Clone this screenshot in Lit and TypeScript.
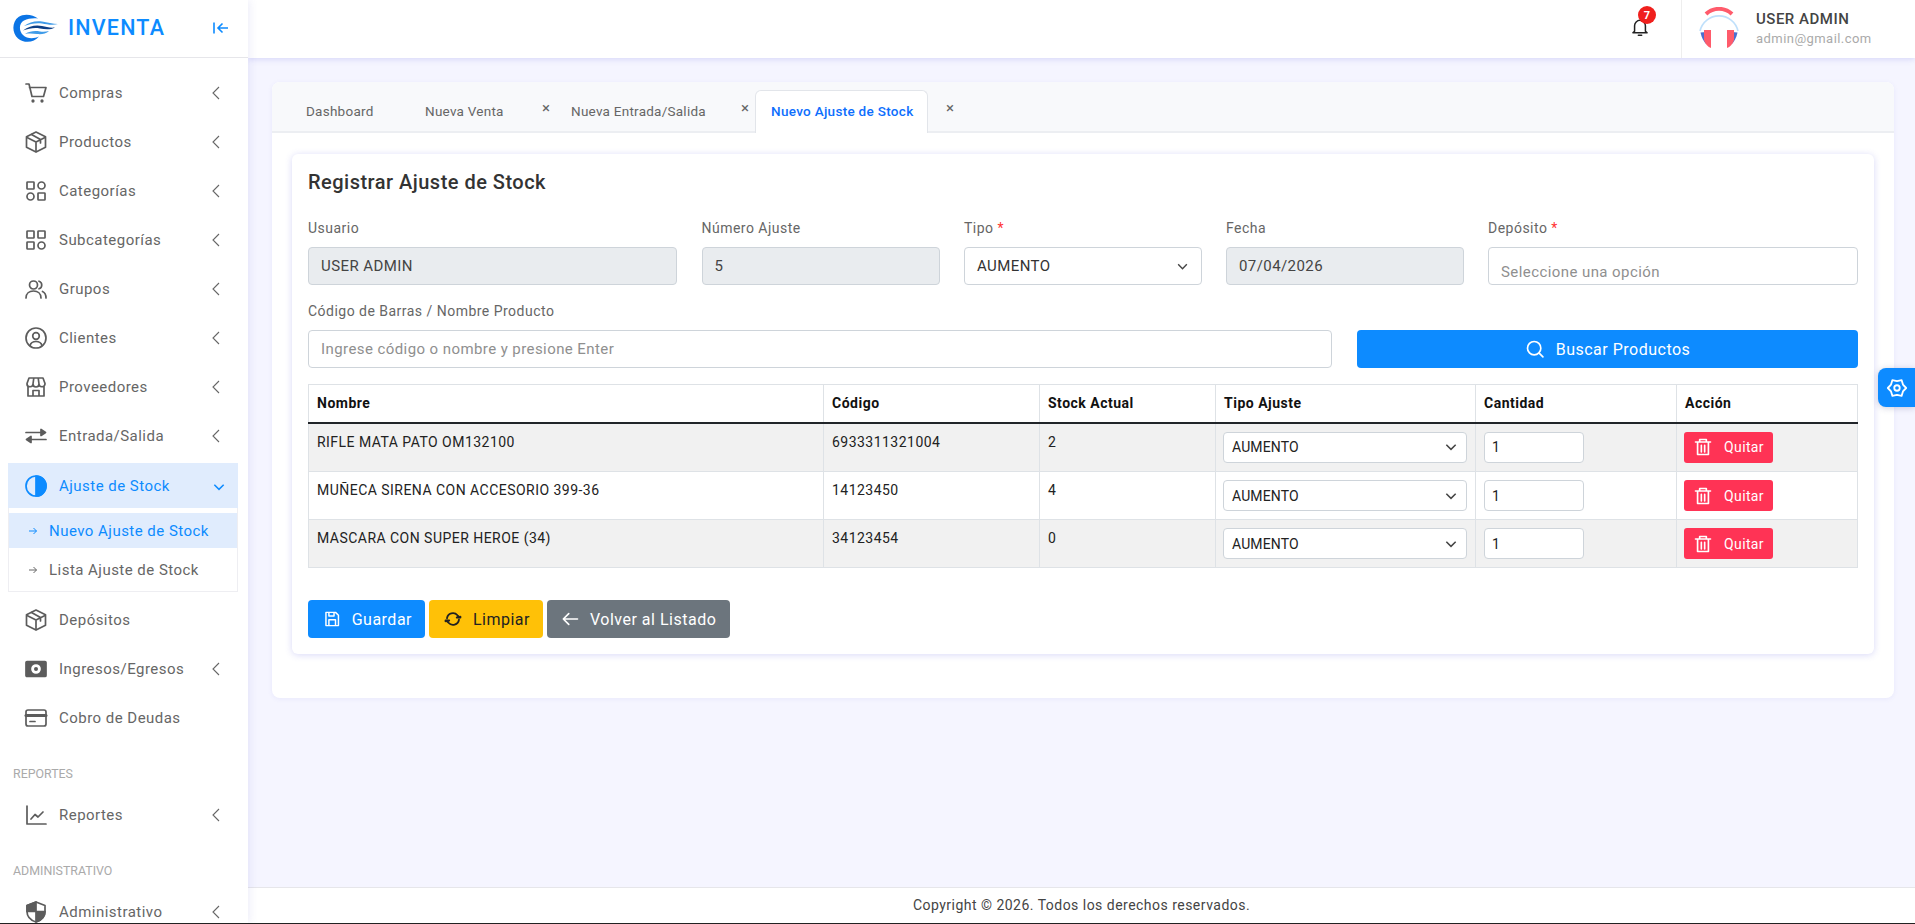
import { LitElement, html, css, svg } from 'lit';
import { customElement } from 'lit/decorators.js';

const line = (body: unknown, size = 24, sw = 1.7) => html`<svg width=${size} height=${size} viewBox="0 0 24 24" fill="none" stroke="currentColor" stroke-width=${sw} stroke-linecap="round" stroke-linejoin="round">${body}</svg>`;

const icons: Record<string, unknown> = {
  cart: svg`<path d="M2 3h3l3 12.500h11.500L22 6.500H5.500"/><circle cx="9" cy="20" r=".8"/><circle cx="18" cy="20" r=".8"/>`,
  box: svg`<path d="M12 2l9.500 4.800v10.400L12 22l-9.500-4.800V6.800z"/><path d="M3 7.500l9 4.500 9-4.500M12 12v9.500M7.500 4.500l9 5v3.500"/>`,
  cat: svg`<rect x="3" y="3" width="7" height="7" rx=".6"/><circle cx="17.500" cy="6.500" r="3.500"/><circle cx="6.500" cy="17.500" r="3.500"/><rect x="14" y="14" width="7" height="7" rx=".6"/>`,
  sub: svg`<rect x="3" y="3" width="7" height="7" rx=".6"/><rect x="14" y="3" width="7" height="7" rx=".6"/><rect x="3" y="14" width="7" height="7" rx=".6"/><circle cx="17.500" cy="17.500" r="3.500"/>`,
  users: svg`<circle cx="9.500" cy="8" r="4"/><path d="M2 21c0-4.500 3.200-7 7.500-7s7.500 2.500 7.500 7M15 4.200a4 4 0 0 1 0 7.600M18.500 14.500c2.200 1 3.500 3.200 3.500 6.500"/>`,
  client: svg`<circle cx="12" cy="12" r="10"/><circle cx="12" cy="10" r="3.300"/><path d="M6 19.500c.8-2.800 3-4 6-4s5.200 1.200 6 4"/>`,
  store: svg`<path d="M4 11v10h16V11M3 8.500 5 3h14l2 5.500a3 3 0 0 1-6 .5 3 3 0 0 1-6 0 3 3 0 0 1-6-.500zM9 9l.8-6M15 9l-.8-6M9 21v-5.500h6V21"/>`,
  swap: svg`<path d="M2 8.500h16M22 15.500H6"/><path d="M17 5.500v6l4.500-3zM7 12.500v6l-4.500-3z" fill="currentColor"/>`,
  half: svg`<circle cx="12" cy="12" r="10"/><path d="M12 2a10 10 0 0 1 0 20z" fill="currentColor"/>`,
  money: svg`<rect x="2" y="4.500" width="20" height="15" rx="1" fill="currentColor"/><circle cx="12" cy="12" r="4" fill="#fff" stroke="#fff"/><circle cx="12" cy="12" r="2" fill="currentColor" stroke="none"/>`,
  card: svg`<rect x="2" y="4" width="20" height="16" rx="2"/><path d="M2 9.500h20" stroke-width="3"/><path d="M6 15.500h5"/>`,
  chart: svg`<path d="M3 3v18h19"/><path d="M7 16l4-4.500 3 2.500 5-5"/>`,
  shield: svg`<path d="M12 2l9 3.500v6c0 5-3.600 8.800-9 10.500-5.400-1.700-9-5.500-9-10.500v-6z"/><path d="M12 2v20h0c5.400-1.700 9-5.500 9-10.500H3v-6z" fill="currentColor"/>`,
  gear: svg`<path d="M22 12l-3.500 3.750L17 20.660l-5-1.160-5 1.160-1.500-4.910L2 12l3.500-3.750L7 3.340l5 1.160 5-1.160 1.500 4.910z"/><circle cx="12" cy="12" r="3"/>`,
};

const chevLeft = html`<svg class="chev" width="10" height="14" viewBox="0 0 10 14" fill="none" stroke="currentColor" stroke-width="1.100"><path d="M8 1L2 7l6 6"/></svg>`;
const chevDown = (w = 12) => html`<svg width=${w} height=${w} viewBox="0 0 12 12" fill="none" stroke="currentColor" stroke-width="1.300"><path d="M2 4l4 4 4-4"/></svg>`;
const smallArrow = html`<svg width="10" height="10" viewBox="0 0 10 10" fill="none" stroke="currentColor" stroke-width="1"><path d="M1 5h7.500M5.500 2l3 3-3 3"/></svg>`;

const logo = html`<svg width="46" height="28" viewBox="0 0 46 28">
  <path d="M25 4.500C20 .5 11-1 5.500 3-1 7.500-1.500 19 5 24.500c6 5 16 4.500 21-2-5 2.500-12 2.500-16-1.500C5.500 16.500 6 9 11 6.500c4-2 9-2.500 14-2z" fill="#0b74e5"/>
  <path d="M11 12c5-4 12-5.500 18-4.500 5 .8 11 2.500 16 2.500-5 1.500-11 .5-16-.5-6-1-12 .5-18 2.500z" fill="#3f9be8"/>
  <path d="M10 16.500c6-4.500 13-6 19-4.500 4 1 8 2 13 1.500-4 2.500-10 2-15 1-6-1-11 0-17 2z" fill="#0d3f86"/>
  <path d="M12 20c5-3 10-3.500 15-2.500 3 .5 6 .3 9-.5-3 3-8 3.500-12 3-4-.5-8-.8-12 0z" fill="#3f9be8"/>
</svg>`;

const avatar = html`<svg width="42" height="42" viewBox="0 0 42 42">
  <path d="M2 24A19.500 19.500 0 0 1 40 24" fill="none" stroke="#bfe0fb" stroke-width="1.600"/>
  <path d="M8 7a19 19 0 0 1 26 0" fill="none" stroke="#ff5b6b" stroke-width="4"/>
  <path d="M2.500 25.500c1 5 3.500 9.500 6 12V25z" fill="#4a6fd0"/>
  <path d="M39.500 25.500c-1 5-3.500 9.500-6 12V25z" fill="#4a6fd0"/>
  <path d="M6 23h7v18c-3-1-5.500-3.500-7-8z" fill="#ff5b6b"/>
  <path d="M29 23h7v10c-1.500 4.500-4 7-7 8z" fill="#ff5b6b"/>
</svg>`;

const menuTop = [
  { label: 'Compras', icon: 'cart' },
  { label: 'Productos', icon: 'box' },
  { label: 'Categorías', icon: 'cat' },
  { label: 'Subcategorías', icon: 'sub' },
  { label: 'Grupos', icon: 'users' },
  { label: 'Clientes', icon: 'client' },
  { label: 'Proveedores', icon: 'store' },
  { label: 'Entrada/Salida', icon: 'swap' },
];

const rows = [
  { name: 'RIFLE MATA PATO OM132100', code: '6933311321004', stock: 2 },
  { name: 'MUÑECA SIRENA CON ACCESORIO 399-36', code: '14123450', stock: 4 },
  { name: 'MASCARA CON SUPER HEROE (34)', code: '34123454', stock: 0 },
];

@customElement('app-root')
export class AppRoot extends LitElement {
  static styles = css`
    :host {
      display: block;
      font-family: Roboto, "Liberation Sans", sans-serif;
      color: #333;
    }
    * { box-sizing: border-box; }
    .page {
      display: grid;
      grid-template-columns: 248px 1fr;
      height: 924px;
      overflow: hidden;
      background: #f5f5ff;
      border-bottom: 1px solid #222;
    }

    /* sidebar */
    .side {
      background: #fff;
      box-shadow: 2px 0 8px rgba(90, 90, 200, .1);
      overflow: hidden;
      z-index: 2;
    }
    .brand {
      height: 58px;
      display: flex;
      align-items: center;
      padding: 0 19px 2px 13px;
      border-bottom: 1px solid #e6e6ea;
      color: #0d8bff;
    }
    .brand b {
      font-size: 21.500px;
      font-weight: 500;
      letter-spacing: 1.200px;
      margin-left: 9px;
      flex: 1;
    }
    .menu { padding: 10px 10px 0 8px; }
    .item {
      height: 49px;
      display: flex;
      align-items: center;
      padding-left: 16px;
      font-size: 15px;
      letter-spacing: .47px;
      color: #666;
    }
    .item .ic { width: 24px; height: 24px; margin-right: 11px; color: #5c5c5c; }
    .item span { flex: 1; }
    .item .chev { margin-right: 17px; color: #666; }
    .item.open {
      height: 45px;
      margin-top: 3px;
      background: #e0ecfd;
      color: #0d8bff;
    }
    .item.open .ic { color: #0d8bff; }
    .item.open .dn { margin-right: 12px; margin-top: 3px; display: flex; }
    .sub {
      border: 1px solid #eeeef2;
      border-top: 0;
      padding-top: 5px;
      height: 84px;
      font-size: 15px;
      letter-spacing: .47px;
      color: #666;
      margin-bottom: 3px;
    }
    .sub div {
      height: 35px;
      display: flex;
      align-items: center;
      gap: 11px;
      padding-left: 19px;
    }
    .sub .on { background: #e0ecfd; color: #0d8bff; }
    .sub .off { height: 43px; }
    .sec {
      font-size: 12.400px;
      color: #aaa;
      padding-left: 5px;
      height: 18px;
      line-height: 18px;
    }
    .sec.r { margin-top: 23px; margin-bottom: 7px; }
    .sec.a { margin-top: 23px; margin-bottom: 7px; }

    /* top bar */
    .main { display: flex; flex-direction: column; min-width: 0; }
    .top {
      height: 58px;
      flex: none;
      background: #fff;
      box-shadow: 0 1px 6px rgba(90, 90, 220, .22);
      display: flex;
      justify-content: flex-end;
      align-items: stretch;
      padding-right: 18px;
    }
    .bell {
      position: relative;
      width: 20px;
      align-self: center;
      margin-right: 31px;
      margin-bottom: 4px;
      color: #222;
      display: flex;
    }
    .badge {
      position: absolute;
      top: -11px;
      left: 8px;
      width: 18px;
      height: 18px;
      border-radius: 50%;
      background: #f0201d;
      color: #fff;
      font-size: 11px;
      font-weight: 700;
      display: flex;
      align-items: center;
      justify-content: center;
    }
    .user {
      border-left: 1px solid #eee;
      width: 216px;
      display: flex;
      align-items: center;
      padding-left: 16px;
      gap: 16px;
    }
    .user svg { margin-bottom: 3px; }
    .user .nm { font-size: 15px; font-weight: 500; letter-spacing: .5px; color: #444; margin-bottom: 3px; margin-top: -3px; }
    .user .em { font-size: 13px; letter-spacing: .45px; color: #aaa; }

    /* content */
    .content { flex: 1; padding: 24px 21px 0 24px; min-height: 0; }
    .panel {
      background: #fff;
      border-radius: 8px;
      box-shadow: 0 1px 5px rgba(90, 90, 220, .08);
      padding-bottom: 44px;
    }
    .tabs {
      height: 51px;
      display: flex;
      align-items: flex-end;
      background: #f8f9fb;
      border-bottom: 2px solid #eceef2;
      border-radius: 8px 8px 0 0;
      padding-left: 17px;
      font-size: 13.500px;
      letter-spacing: .25px;
      color: #666;
    }
    .tab { height: 41px; padding: 0 17px; display: flex; align-items: center; margin-bottom: -2px; padding-bottom: 3px; white-space: nowrap; }
    .tab.t1 { width: 118px; }
    .tab.t2 { width: 135px; padding-left: 18px; }
    .tab.t3 { width: 191px; padding-left: 21px; }
    .x { font-size: 15px; width: 8px; color: #666; align-self: center; padding-top: 3px; }
    .x.x2 { margin-right: 6px; }
    .x.x3 { margin-left: 18px; }
    .tab.on {
      background: #fff;
      color: #0d6efd;
      border: 1px solid #e2e5ea;
      border-bottom: 0;
      border-radius: 6px 6px 0 0;
      width: 173px;
      height: 43px;
      padding: 0 10px 3px 15px;
      font-weight: 500;
      letter-spacing: .3px;
    }
    .card {
      margin: 21px 20px 0;
      background: #fff;
      border-radius: 6px;
      box-shadow: 0 1px 7px rgba(90, 90, 220, .24);
      padding: 16px;
      height: 500px;
    }
    h2 {
      margin: 0 0 26px;
      font-size: 20px;
      line-height: 24px;
      font-weight: 500;
      letter-spacing: .48px;
      color: #333;
    }
    .form1 {
      display: grid;
      grid-template-columns: 369px 238px 237.500px 237.500px 1fr;
      column-gap: 24.500px;
      margin-bottom: 18px;
    }
    .form2 {
      display: grid;
      grid-template-columns: 1024px 1fr;
      column-gap: 25px;
      margin-bottom: 16px;
    }
    label {
      display: block;
      font-size: 14px;
      line-height: 16px;
      letter-spacing: .48px;
      color: #666;
      margin-bottom: 11px;
      height: 16px;
    }
    label i { color: #f33; font-style: normal; }
    .ctl {
      height: 38px;
      border: 1px solid #ced4da;
      border-radius: 4px;
      padding: 0 12px;
      font-size: 15px;
      letter-spacing: .42px;
      display: flex;
      align-items: center;
      justify-content: space-between;
      color: #333;
      background: #fff;
    }
    .ctl.ro { background: #e9ecef; color: #444; }
    .ctl.ph { color: #8f8f8f; }
    .ctl.dep { align-items: flex-end; padding-bottom: 3px; }
    .ctl svg { color: #444; }
    .search {
      align-self: end;
      height: 38px;
      background: #0d8bff;
      color: #fff;
      border-radius: 4px;
      font-size: 16px;
      letter-spacing: .5px;
      display: flex;
      align-items: center;
      justify-content: center;
      gap: 11px;
    }

    table {
      width: 1550px;
      table-layout: fixed;
      border-collapse: collapse;
      font-size: 14px;
      letter-spacing: .47px;
      color: #222;
    }
    .c1 { width: 515px; }
    .c2 { width: 216px; }
    .c3 { width: 176px; }
    .c4 { width: 260px; }
    .c5 { width: 201px; }
    th, td { border: 1px solid #dee2e6; padding: 0 8px; text-align: left; }
    th {
      height: 38px;
      font-weight: 700;
      letter-spacing: .5px;
      color: #111;
      border-bottom: 2px solid #212529;
    }
    td { height: 48px; vertical-align: top; padding-top: 10px; }
    tbody tr:first-child td { height: 49px; }
    td.ctlcell { padding-top: 8px; }
    tr.odd td { background: #f1f1f1; }
    .ctl.sm {
      height: 31px;
      font-size: 14px;
      padding: 0 8px;
      letter-spacing: .12px;
      color: #222;
    }
    .ctl.sel { margin-left: -1px; }
    .ctl.qty { width: 100px; padding: 0 7px; }
    .quit {
      width: 89px;
      height: 31px;
      margin-left: -1px;
      background: #ff3355;
      color: #fff;
      border-radius: 3px;
      display: flex;
      align-items: center;
      justify-content: center;
      gap: 11px;
      font-size: 14px;
      letter-spacing: .35px;
    }
    .actions { display: flex; gap: 4px; margin-top: 32px; }
    .btn {
      height: 38px;
      border-radius: 4px;
      padding: 0 13px 0 15px;
      display: flex;
      align-items: center;
      gap: 11px;
      font-size: 16px;
      letter-spacing: .5px;
      color: #fff;
      white-space: nowrap;
    }
    .btn.blue { background: #0d8bff; width: 117px; }
    .btn.yellow { background: #ffc107; color: #222; width: 114px; }
    .btn.gray { background: #6c757d; width: 183px; padding-left: 13px; gap: 10px; }

    .foot {
      flex: none;
      height: 36px;
      background: #fff;
      border-top: 1px solid #e6e6ea;
      display: flex;
      align-items: center;
      justify-content: center;
      padding-bottom: 2px;
      font-size: 14px;
      letter-spacing: .48px;
      color: #444;
    }
    .gear {
      position: absolute;
      right: 0;
      top: 368px;
      width: 37px;
      height: 39px;
      background: #0d8bff;
      border-radius: 8px 0 0 8px;
      color: #fff;
      display: flex;
      align-items: center;
      justify-content: center;
      box-shadow: 0 1px 6px rgba(60, 60, 120, .25);
    }
  `;

  renderItem(label: string, icon: string, arrow = true) {
    return html`<div class="item">
      <div class="ic">${line(icons[icon])}</div>
      <span>${label}</span>
      ${arrow ? chevLeft : ''}
    </div>`;
  }

  render() {
    return html`<div class="page">
      <aside class="side">
        <div class="brand">
          ${logo}
          <b>INVENTA</b>
          <svg width="17" height="14" viewBox="0 0 17 14" fill="none" stroke="currentColor" stroke-width="1.600"><path d="M2 1.500v11M16 7H6M10.500 2.500 6 7l4.500 4.500"/></svg>
        </div>
        <nav class="menu">
          ${menuTop.map((m) => this.renderItem(m.label, m.icon))}
          <div class="item open">
            <div class="ic">${line(icons.half)}</div>
            <span>Ajuste de Stock</span>
            <div class="dn">${chevDown(14)}</div>
          </div>
          <div class="sub">
            <div class="on">${smallArrow}Nuevo Ajuste de Stock</div>
            <div class="off">${smallArrow}Lista Ajuste de Stock</div>
          </div>
          ${this.renderItem('Depósitos', 'box', false)}
          ${this.renderItem('Ingresos/Egresos', 'money')}
          ${this.renderItem('Cobro de Deudas', 'card', false)}
          <div class="sec r">REPORTES</div>
          ${this.renderItem('Reportes', 'chart')}
          <div class="sec a">ADMINISTRATIVO</div>
          ${this.renderItem('Administrativo', 'shield')}
        </nav>
      </aside>

      <div class="main">
        <header class="top">
          <div class="bell">
            ${line(svg`<path d="M5.500 17V10.500a6.500 6.500 0 0 1 13 0V17l2 2H3.500zM10 22h4"/>`, 20, 1.800)}
            <div class="badge">7</div>
          </div>
          <div class="user">
            ${avatar}
            <div>
              <div class="nm">USER ADMIN</div>
              <div class="em">admin@gmail.com</div>
            </div>
          </div>
        </header>

        <div class="content">
          <section class="panel">
            <div class="tabs">
              <div class="tab t1">Dashboard</div>
              <div class="tab t2">Nueva Venta</div><div class="x">×</div>
              <div class="tab t3">Nueva Entrada/Salida</div><div class="x x2">×</div>
              <div class="tab on">Nuevo Ajuste de Stock</div>
              <div class="x x3">×</div>
            </div>
            <div class="card">
              <h2>Registrar Ajuste de Stock</h2>
              <div class="form1">
                <div><label>Usuario</label><div class="ctl ro">USER ADMIN</div></div>
                <div><label>Número Ajuste</label><div class="ctl ro">5</div></div>
                <div><label>Tipo <i>*</i></label><div class="ctl">AUMENTO ${chevDown(13)}</div></div>
                <div><label>Fecha</label><div class="ctl ro">07/04/2026</div></div>
                <div><label>Depósito <i>*</i></label><div class="ctl ph dep">Seleccione una opción</div></div>
              </div>
              <div class="form2">
                <div><label>Código de Barras / Nombre Producto</label><div class="ctl ph">Ingrese código o nombre y presione Enter</div></div>
                <div class="search">
                  ${line(svg`<circle cx="11" cy="11" r="8"/><path d="M17 17l4.500 4.500"/>`, 20, 2)}
                  Buscar Productos
                </div>
              </div>
              <table>
                <colgroup><col class="c1"/><col class="c2"/><col class="c3"/><col class="c4"/><col class="c5"/><col/></colgroup>
                <thead><tr><th>Nombre</th><th>Código</th><th>Stock Actual</th><th>Tipo Ajuste</th><th>Cantidad</th><th>Acción</th></tr></thead>
                <tbody>
                  ${rows.map((r, i) => html`<tr class=${i % 2 === 0 ? 'odd' : ''}>
                    <td>${r.name}</td>
                    <td>${r.code}</td>
                    <td>${r.stock}</td>
                    <td class="ctlcell"><div class="ctl sm sel">AUMENTO ${chevDown(14)}</div></td>
                    <td class="ctlcell"><div class="ctl sm qty">1</div></td>
                    <td class="ctlcell"><div class="quit">
                      ${line(svg`<path d="M3 6h18M8 6V3h8v3M5.500 6v15h13V6M10 10v8M14 10v8"/>`, 20, 2)}
                      Quitar
                    </div></td>
                  </tr>`)}
                </tbody>
              </table>
              <div class="actions">
                <div class="btn blue">${line(svg`<path d="M4 3h13l4 4v14H4zM8 3v5h7V3M8 21v-8h9v8"/>`, 18, 2)}Guardar</div>
                <div class="btn yellow">${line(svg`<path d="M4 11a8 8 0 0 1 14-4l2 2M20 13a8 8 0 0 1-14 4l-2-2M17 10h5V9M7 14H2v1"/>`, 18, 2.400)}Limpiar</div>
                <div class="btn gray">${line(svg`<path d="M21 12H4M10.500 5.500 4 12l6.500 6.500"/>`, 20, 2)}Volver al Listado</div>
              </div>
            </div>
          </section>
        </div>

        <footer class="foot">Copyright © 2026. Todos los derechos reservados.</footer>
      </div>
      <div class="gear">${line(icons.gear, 22, 2)}</div>
    </div>`;
  }
}
